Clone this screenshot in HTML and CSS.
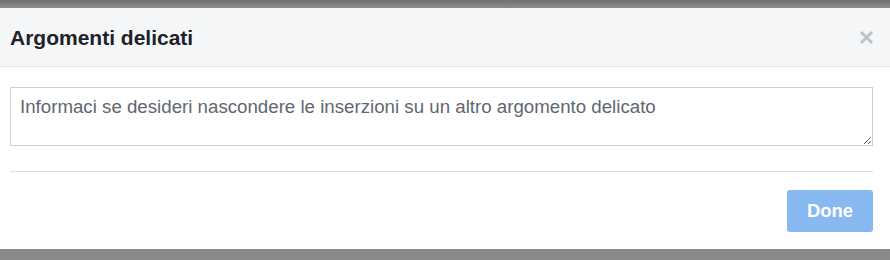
FILE: index.html
```html
<!DOCTYPE html>
<html lang="it">
<head>
    <meta charset="UTF-8">
    <title>Argomenti delicati</title>
    <link rel="stylesheet" href="styles.css">
</head>
<body>
    <div class="dialog">
        <div class="dialog-header">
            <h2 class="dialog-title">Argomenti delicati</h2>
            <button class="close" aria-label="Chiudi">
                <svg width="15" height="15" viewBox="0 0 15 15">
                    <path d="M2 2 L13 13 M13 2 L2 13" stroke="#bec3c9" stroke-width="3" stroke-linecap="butt"/>
                </svg>
            </button>
        </div>
        <div class="dialog-body">
            <textarea class="topic-input" placeholder="Informaci se desideri nascondere le inserzioni su un altro argomento delicato"></textarea>
            <div class="divider"></div>
            <div class="actions">
                <button class="done" disabled>Done</button>
            </div>
        </div>
    </div>
</body>
</html>
```

FILE: styles.css
```css
html, body {
    margin: 0;
    padding: 0;
    height: 260px;
    overflow: hidden;
}
body {
    font-family: 'Liberation Sans', Arial, sans-serif;
    background: linear-gradient(#6f6f6f, #8c8c8c 8px, #8a8a8a);
}
.dialog {
    margin-top: 8px;
    height: 241px;
    background-color: #fff;
}
.dialog-header {
    height: 58px;
    background-color: #f5f6f7;
    border-bottom: 1px solid #e5e5e5;
    display: flex;
    align-items: center;
    justify-content: space-between;
    padding: 0 16px 0 10px;
}
.dialog-title {
    margin: 0;
    font-size: 21px;
    font-weight: bold;
    color: #1d2129;
    padding-top: 2px;
}
.close {
    border: none;
    background: none;
    padding: 0;
    width: 15px;
    height: 15px;
    display: flex;
    cursor: pointer;
}
.dialog-body {
    padding: 20px 17px 0 10px;
}
.topic-input {
    display: block;
    box-sizing: border-box;
    width: 100%;
    height: 59px;
    margin: 0;
    padding: 8px 9px;
    border: 1px solid #ccd0d5;
    border-radius: 0;
    font-family: 'Liberation Sans', Arial, sans-serif;
    font-size: 18.7px;
    line-height: 22px;
    color: #1d2129;
    outline: none;
}
.topic-input::placeholder {
    color: #606770;
}
.divider {
    margin-top: 25px;
    border-top: 1px solid #dddfe2;
}
.actions {
    display: flex;
    justify-content: flex-end;
    padding-top: 18px;
}
.done {
    width: 86px;
    height: 42px;
    border: none;
    border-radius: 3px;
    background-color: #87b8ef;
    color: #fff;
    font-family: 'Liberation Sans', Arial, sans-serif;
    font-size: 18.5px;
    font-weight: bold;
}
```
